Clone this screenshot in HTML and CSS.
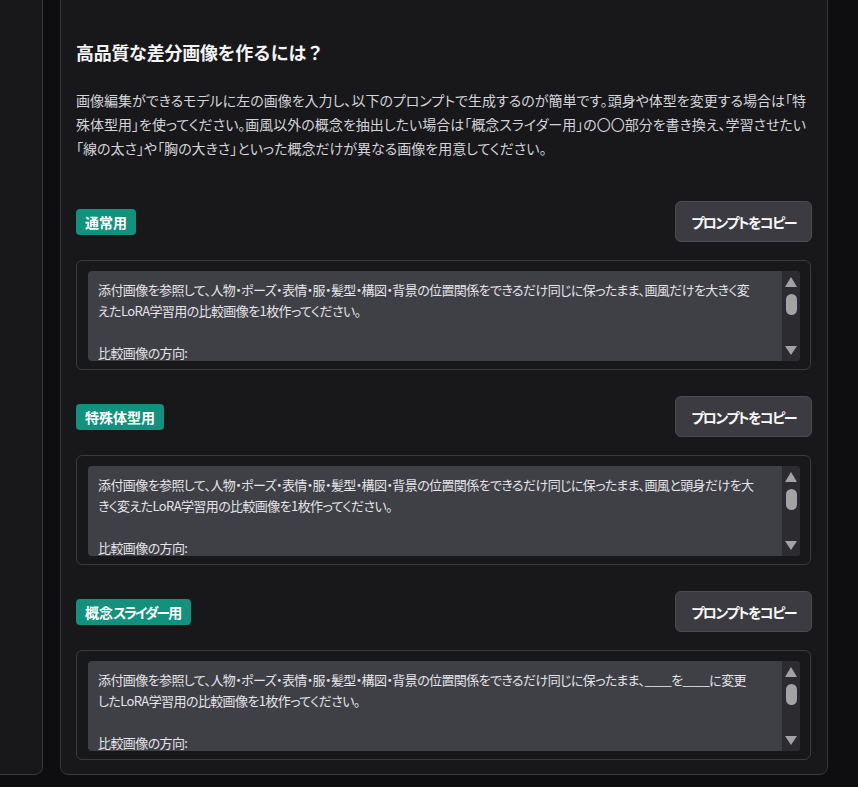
FILE: index.html
```html
<!DOCTYPE html>
<html lang="ja">
<head>
<meta charset="utf-8">
<title>高品質な差分画像を作るには？</title>
<link rel="stylesheet" href="styles.css">
</head>
<body>
<div class="page">
  <aside class="sidebar"></aside>
  <main class="card">
    <h2 class="title">高品質な差分画像を作るには？</h2>
    <p class="lead">画像編集ができるモデルに左の画像を入力し、以下のプロンプトで生成するのが簡単です。頭身や体型を変更する場合は「特<br>殊体型用」を使ってください。画風以外の概念を抽出したい場合は「概念スライダー用」の〇〇部分を書き換え、学習させたい<br>「線の太さ」や「胸の大きさ」といった概念だけが異なる画像を用意してください。</p>

    <section class="prompt">
      <div class="prompt-head">
        <span class="badge">通常用</span>
        <button class="copy-btn" type="button">プロンプトをコピー</button>
      </div>
      <div class="prompt-box">
        <div class="prompt-field">
          <div class="prompt-text">添付画像を参照して、人物・ポーズ・表情・服・髪型・構図・背景の位置関係をできるだけ同じに保ったまま、画風だけを大きく変<br>えたLoRA学習用の比較画像を1枚作ってください。<br><br>比較画像の方向:</div>
          <div class="scrollbar"><span class="arrow-up"></span><span class="thumb"></span><span class="arrow-down"></span></div>
        </div>
      </div>
    </section>

    <section class="prompt">
      <div class="prompt-head">
        <span class="badge">特殊体型用</span>
        <button class="copy-btn" type="button">プロンプトをコピー</button>
      </div>
      <div class="prompt-box">
        <div class="prompt-field">
          <div class="prompt-text">添付画像を参照して、人物・ポーズ・表情・服・髪型・構図・背景の位置関係をできるだけ同じに保ったまま、画風と頭身だけを大<br>きく変えたLoRA学習用の比較画像を1枚作ってください。<br><br>比較画像の方向:</div>
          <div class="scrollbar"><span class="arrow-up"></span><span class="thumb"></span><span class="arrow-down"></span></div>
        </div>
      </div>
    </section>

    <section class="prompt">
      <div class="prompt-head">
        <span class="badge">概念<span class="tight">スライダー</span>用</span>
        <button class="copy-btn" type="button">プロンプトをコピー</button>
      </div>
      <div class="prompt-box">
        <div class="prompt-field">
          <div class="prompt-text">添付画像を参照して、人物・ポーズ・表情・服・髪型・構図・背景の位置関係をできるだけ同じに保ったまま、____を____に変更<br>したLoRA学習用の比較画像を1枚作ってください。<br><br>比較画像の方向:</div>
          <div class="scrollbar"><span class="arrow-up"></span><span class="thumb"></span><span class="arrow-down"></span></div>
        </div>
      </div>
    </section>
  </main>
</div>
</body>
</html>
```

FILE: styles.css
```css
html, body {
  background: #0e0e10;
}

body {
  margin: 0;
  font-family: "Noto Sans CJK JP", "Noto Sans", sans-serif;
  font-feature-settings: "palt";
  color: #e4e4e7;
  overflow: hidden;
}

.page {
  display: flex;
  align-items: stretch;
  gap: 17px;
  margin-top: -20px;
  margin-left: -20px;
}

.sidebar {
  width: 63px;
  box-sizing: border-box;
  background: #18181b;
  border: 1px solid #36363b;
  border-radius: 8px;
}

.card {
  width: 768px;
  box-sizing: border-box;
  background: #18181b;
  border: 1px solid #36363b;
  border-radius: 8px;
  padding: 57px 16px 14px 15px;
}

.title {
  margin: 0;
  font-size: 18px;
  line-height: 28px;
  font-weight: 700;
  font-feature-settings: normal;
  letter-spacing: -0.3px;
  color: #f4f4f5;
}

.lead {
  margin: 22px 0 0;
  font-size: 14px;
  line-height: 24px;
  color: #d4d4d8;
  white-space: nowrap;
}

.prompt {
  margin-top: 41px;
}

.prompt + .prompt {
  margin-top: 26px;
}

.prompt-head {
  display: flex;
  align-items: center;
  justify-content: space-between;
  height: 41px;
}

.badge {
  display: inline-block;
  height: 26px;
  line-height: 26px;
  padding: 0 9px;
  border-radius: 4px;
  background: #13917f;
  color: #ffffff;
  font-size: 14px;
  font-weight: 700;
}

.tight {
  letter-spacing: -2px;
}

.copy-btn {
  height: 41px;
  margin-right: -1px;
  padding: 0 15px;
  border: 1px solid #4b4b52;
  border-radius: 6px;
  background: #3b3b41;
  color: #fafafa;
  font-family: inherit;
  font-feature-settings: "palt";
  font-size: 14px;
  font-weight: 700;
  letter-spacing: -1.5px;
}

.prompt-box {
  margin-top: 18px;
  border: 1px solid #3a3a40;
  border-radius: 6px;
  padding: 10px 10px 8px 11px;
}

.prompt-field {
  display: flex;
  height: 90px;
  background: #3f3f46;
  border-radius: 4px;
  overflow: hidden;
}

.prompt-text {
  flex: 1;
  padding: 8px 10px;
  font-size: 13px;
  line-height: 21px;
  letter-spacing: -0.6px;
  color: #e4e4e7;
  overflow: hidden;
  white-space: nowrap;
}

.scrollbar {
  width: 18px;
  flex: none;
  background: #2c2c30;
  display: flex;
  flex-direction: column;
  align-items: center;
  padding: 6px 0 6px;
  box-sizing: border-box;
}

.arrow-up {
  width: 0;
  height: 0;
  border-left: 6.5px solid transparent;
  border-right: 6.5px solid transparent;
  border-bottom: 10px solid #a3a3a3;
}

.thumb {
  width: 11px;
  height: 21px;
  margin-top: 7px;
  border-radius: 6px;
  background: #a3a3a3;
}

.arrow-down {
  margin-top: auto;
  width: 0;
  height: 0;
  border-left: 6.5px solid transparent;
  border-right: 6.5px solid transparent;
  border-top: 9px solid #a3a3a3;
}
```
